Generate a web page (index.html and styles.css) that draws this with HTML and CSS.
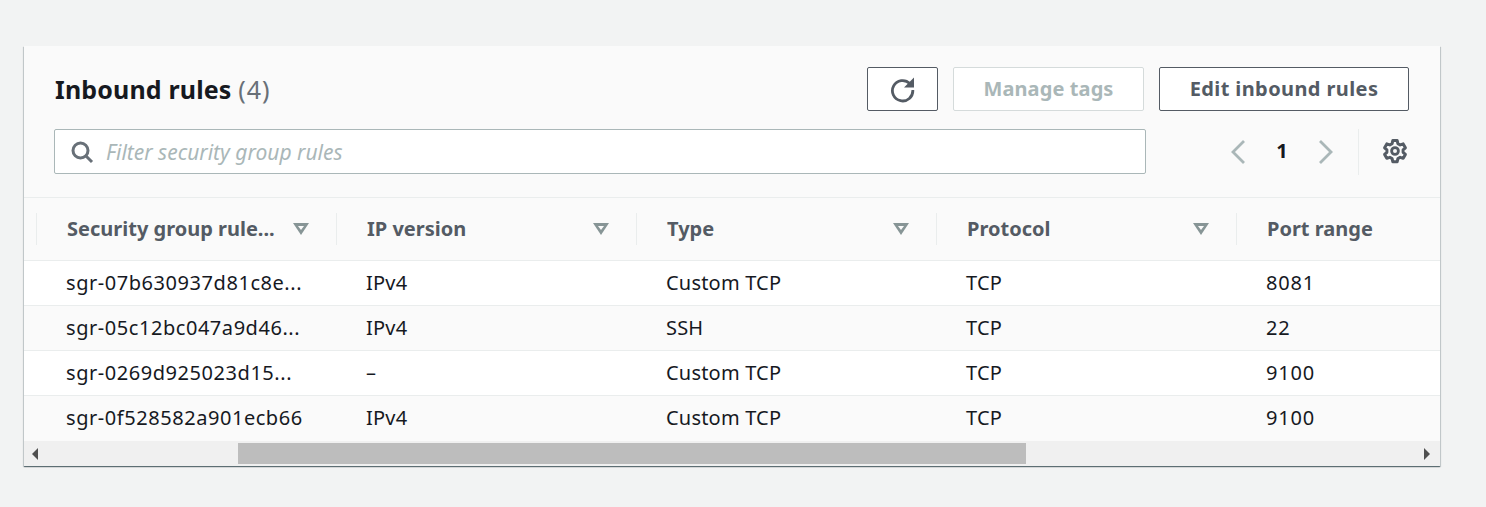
FILE: index.html
```html
<!DOCTYPE html>
<html lang="en">

<head>
    <meta charset="UTF-8">
    <meta name="viewport" content="width=device-width, initial-scale=1.0">
    <title>Inbound rules</title>
    <link rel="stylesheet" href="styles.css">
</head>

<body>
    <section class="card">
        <div class="card-head">
            <div class="title-row">
                <h2 class="title">Inbound rules <span class="count">(4)</span></h2>
                <div class="actions">
                    <button class="btn btn-icon" type="button" aria-label="Refresh">
                        <svg width="28" height="28" viewBox="0 0 28 28" fill="none">
                            <path d="M20.800 8.500A10.200 10.200 0 1 0 23.800 15" stroke="#545b64" stroke-width="2.800"/>
                            <path d="M25 2.500v10H15z" fill="#545b64"/>
                        </svg>
                    </button>
                    <button class="btn btn-disabled" type="button"><span class="btn-text">Manage tags</span></button>
                    <button class="btn btn-edit" type="button"><span class="btn-text">Edit inbound rules</span></button>
                </div>
            </div>
            <div class="filter-row">
                <div class="filter">
                    <svg class="search-icon" width="24" height="24" viewBox="0 0 24 24" fill="none">
                        <circle cx="10.500" cy="10.500" r="7.500" stroke="#687078" stroke-width="3"/>
                        <path d="M15.500 15.500l6.500 6.500" stroke="#687078" stroke-width="3"/>
                    </svg>
                    <span class="placeholder">Filter security group rules</span>
                </div>
                <div class="pager">
                    <svg width="16" height="26" viewBox="0 0 16 26" fill="none">
                        <path d="M14 2L3 13l11 11" stroke="#aab7b8" stroke-width="2.800"/>
                    </svg>
                    <span class="page-num">1</span>
                    <svg width="16" height="26" viewBox="0 0 16 26" fill="none">
                        <path d="M2 2l11 11L2 24" stroke="#aab7b8" stroke-width="2.800"/>
                    </svg>
                </div>
                <div class="settings">
                    <svg width="26" height="26" viewBox="0 0 26 26" fill="none">
                        <path d="M10.800 2.500h4.400l.7 3.100 2.300 1.300 3-1 2.200 3.900-2.300 2.100v2.400l2.300 2.100-2.200 3.900-3-1-2.300 1.300-.7 3.100h-4.400l-.7-3.100-2.300-1.300-3 1-2.200-3.900 2.300-2.100v-2.400L2.600 9.800l2.200-3.900 3 1 2.300-1.300z" stroke="#545b64" stroke-width="3" stroke-linejoin="round"/>
                        <circle cx="13" cy="13" r="3.400" stroke="#545b64" stroke-width="2.800"/>
                    </svg>
                </div>
            </div>
        </div>

        <div class="table-wrap">
            <div class="row row-head">
                <div class="cell"><span class="label">Security group rule...</span><span class="caret"></span></div>
                <div class="cell"><span class="label">IP version</span><span class="caret"></span></div>
                <div class="cell"><span class="label">Type</span><span class="caret"></span></div>
                <div class="cell"><span class="label">Protocol</span><span class="caret"></span></div>
                <div class="cell"><span class="label">Port range</span></div>
            </div>
            <div class="row row-body">
                <div class="cell rule-id">sgr-07b630937d81c8e...</div>
                <div class="cell">IPv4</div>
                <div class="cell">Custom TCP</div>
                <div class="cell">TCP</div>
                <div class="cell port">8081</div>
            </div>
            <div class="row row-body">
                <div class="cell rule-id">sgr-05c12bc047a9d46...</div>
                <div class="cell">IPv4</div>
                <div class="cell">SSH</div>
                <div class="cell">TCP</div>
                <div class="cell port">22</div>
            </div>
            <div class="row row-body">
                <div class="cell rule-id">sgr-0269d925023d15...</div>
                <div class="cell">–</div>
                <div class="cell">Custom TCP</div>
                <div class="cell">TCP</div>
                <div class="cell port">9100</div>
            </div>
            <div class="row row-body">
                <div class="cell rule-id">sgr-0f528582a901ecb66</div>
                <div class="cell">IPv4</div>
                <div class="cell">Custom TCP</div>
                <div class="cell">TCP</div>
                <div class="cell port">9100</div>
            </div>
        </div>

        <div class="scrollbar">
            <span class="arrow arrow-left"></span>
            <div class="track"><div class="thumb"></div></div>
            <span class="arrow arrow-right"></span>
        </div>
    </section>
</body>

</html>
```

FILE: styles.css
```css
body {
    margin: 0;
    padding: 46px 46px 0 24px;
    background-color: #f2f3f3;
    color: #16191f;
    font-family: "Noto Sans", Arial, sans-serif;
    height: 461px;
    overflow: hidden;
}

.card {
    width: 1416px;
    height: 420px;
    background-color: #fafafa;
    box-shadow: 0 1px 1px 0 rgba(0, 28, 36, 0.5), 1px 1px 1px 0 rgba(0, 28, 36, 0.12), -1px 1px 1px 0 rgba(0, 28, 36, 0.12);
    display: flex;
    flex-direction: column;
}

.card-head {
    height: 152px;
    box-sizing: border-box;
    padding: 21px 31px 0 30px;
    border-bottom: 1px solid #eaeded;
}

.title-row {
    display: flex;
    justify-content: space-between;
    align-items: center;
    height: 44px;
}

.title {
    margin: 0 0 0 1px;
    font-size: 25px;
    font-weight: 700;
    line-height: 44px;
    letter-spacing: 0.15px;
}

.count {
    font-weight: 400;
    color: #687078;
    letter-spacing: 1px;
}

.actions {
    display: flex;
    gap: 15px;
}

.btn {
    height: 44px;
    box-sizing: border-box;
    border-radius: 2px;
    background-color: #fff;
    font-family: inherit;
    font-size: 20px;
    font-weight: 700;
    padding: 0;
    display: flex;
    align-items: center;
    justify-content: center;
}

.btn-text {
    padding-bottom: 2px;
}

.btn-icon {
    width: 71px;
    border: 1px solid #545b64;
}

.btn-disabled {
    width: 191px;
    border: 1px solid #d5dbdb;
    color: #aab7b8;
    letter-spacing: 0.1px;
}

.btn-edit {
    width: 250px;
    border: 1px solid #545b64;
    color: #545b64;
    letter-spacing: 0.4px;
}

.filter-row {
    display: flex;
    align-items: center;
    margin-top: 18px;
    height: 45px;
}

.filter {
    width: 1092px;
    height: 45px;
    box-sizing: border-box;
    border: 1px solid #aab7b8;
    border-radius: 2px;
    background-color: #fff;
    display: flex;
    align-items: center;
    padding-left: 15px;
}

.search-icon {
    margin-right: 12px;
}

.placeholder {
    color: #aab7b8;
    font-size: 21px;
    font-style: italic;
}

.pager {
    display: flex;
    align-items: center;
    margin-left: 83px;
    width: 129px;
    box-sizing: border-box;
    padding-left: 1px;
}

.page-num {
    width: 72px;
    text-align: center;
    font-size: 20px;
    font-weight: 700;
    padding-bottom: 3px;
}

.settings {
    height: 44px;
    flex: 1;
    display: flex;
    align-items: center;
    justify-content: flex-end;
    border-left: 1px solid #eaeded;
    padding-bottom: 2px;
    margin-right: 1px;
}

.table-wrap {
    flex: 1;
    overflow: hidden;
    padding-left: 12px;
}

.row {
    display: flex;
    box-sizing: border-box;
    width: 1500px;
    margin-left: -12px;
    padding-left: 12px;
}

.row-head {
    height: 63px;
    font-weight: 700;
    font-size: 20px;
    color: #545b64;
    border-bottom: 1px solid #eaeded;
    align-items: center;
}

.row-head .cell {
    height: 32px;
    border-left: 1px solid #eaeded;
    display: flex;
    align-items: center;
    justify-content: space-between;
    padding-left: 30px;
    padding-right: 27px;
}

.row-head .label {
    padding-bottom: 2px;
}

.row-body {
    height: 45px;
    font-size: 20px;
    letter-spacing: 0.2px;
    align-items: center;
    border-bottom: 1px solid #eaeded;
    background-color: #fff;
}

.row-body:nth-child(odd) {
    background-color: #fafafa;
}

.row-body:last-child {
    border-bottom: 0;
}

.row-body .cell {
    padding-left: 30px;
    padding-bottom: 2px;
}

.row-body .rule-id {
    letter-spacing: 0.55px;
}

.row-body .port {
    letter-spacing: 0.8px;
}

.cell {
    width: 300px;
    box-sizing: border-box;
    flex-shrink: 0;
    white-space: nowrap;
}

.caret {
    width: 0;
    height: 0;
    position: relative;
    border-left: 8px solid transparent;
    border-right: 8px solid transparent;
    border-top: 12px solid #879596;
}

.caret::after {
    content: "";
    position: absolute;
    left: -3px;
    top: -9px;
    border-left: 3px solid transparent;
    border-right: 3px solid transparent;
    border-top: 4px solid #fafafa;
}

.scrollbar {
    height: 25px;
    background-color: #f0f0f0;
    display: flex;
    align-items: center;
}

.track {
    flex: 1;
    height: 100%;
    padding-top: 2px;
    padding-bottom: 2px;
    box-sizing: border-box;
    padding-left: 192px;
}

.thumb {
    width: 788px;
    height: 100%;
    background-color: #bdbdbd;
}

.arrow {
    width: 0;
    height: 0;
    border-top: 6px solid transparent;
    border-bottom: 6px solid transparent;
}

.arrow-left {
    margin: 0 8px;
    border-right: 6px solid #505050;
}

.arrow-right {
    margin: 0 10px 0 8px;
    border-left: 6px solid #505050;
}
```
